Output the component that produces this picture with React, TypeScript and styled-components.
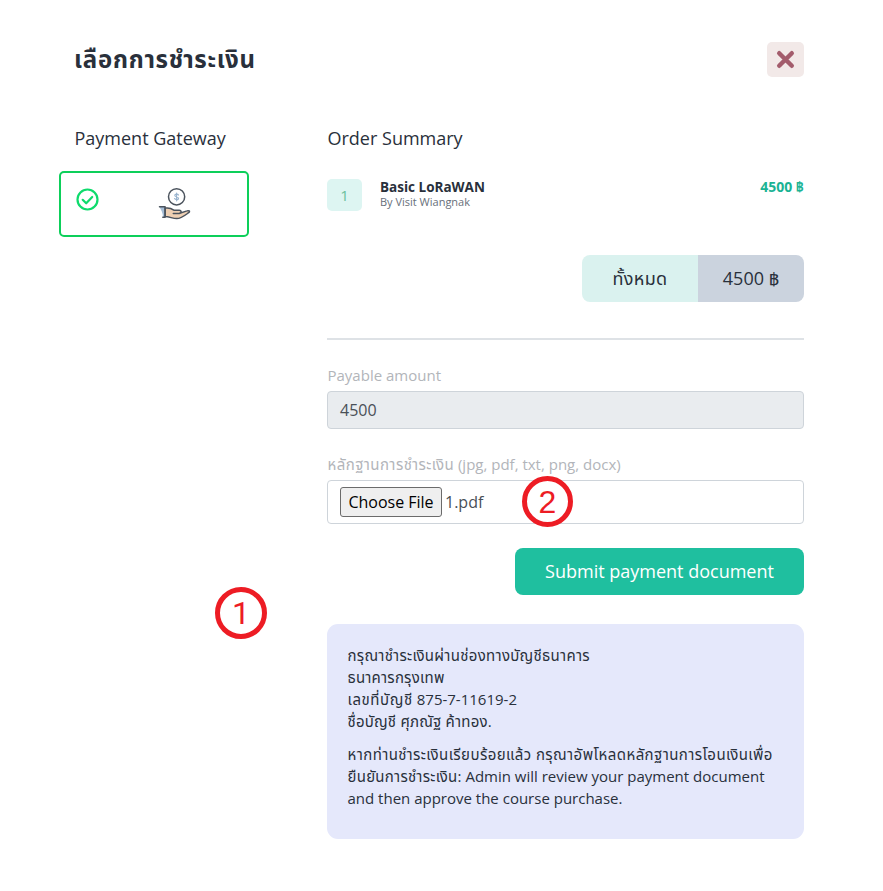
import React from 'react';
import styled, { createGlobalStyle } from 'styled-components';

const Global = createGlobalStyle`
  *, *::before, *::after { box-sizing: border-box; }
  body {
    margin: 0;
    background: #fff;
    color: #29303b;
    font-family: "Open Sans", "Noto Sans", "Noto Sans Thai", sans-serif;
  }
`;

const Page = styled.main`
  position: relative;
  width: 883px;
  height: 891px;
  padding: 42px 79px 0 59px;
  overflow: hidden;
`;

const Header = styled.header`
  display: flex;
  justify-content: space-between;
  height: 35px;
  padding-left: 15px;
`;

const Title = styled.h1`
  margin: 0;
  font-size: 24px;
  font-weight: 700;
  line-height: 33px;
  white-space: nowrap;
`;

const CloseButton = styled.button`
  display: flex;
  align-items: center;
  justify-content: center;
  width: 37px;
  height: 35px;
  padding: 0;
  border: 0;
  border-radius: 5px;
  background: #f2e9e8;
`;

const Columns = styled.div`
  display: grid;
  grid-template-columns: 190px 477px;
  column-gap: 78px;
  margin-top: 49px;
`;

const Heading = styled.h2<{ $indent?: number }>`
  margin: 0;
  padding-left: ${(p) => p.$indent ?? 0.5}px;
  font-size: 18px;
  font-weight: 400;
  line-height: 25px;
  white-space: nowrap;
`;

const Gateway = styled.div`
  display: flex;
  width: 190px;
  height: 66px;
  margin-top: 20px;
  padding: 15px 0 0 15px;
  border: 2px solid #0dcf5a;
  border-radius: 5px;
`;

const HandIcon = styled.svg`
  margin-left: 59px;
  margin-top: -1px;
`;

const Item = styled.div`
  display: flex;
  height: 32px;
  margin-top: 28px;
`;

const Count = styled.div`
  width: 35px;
  height: 32px;
  border-radius: 5px;
  background: #ddf5f2;
  color: #6abf9c;
  font-size: 15px;
  line-height: 32px;
  text-align: center;
`;

const ItemText = styled.div`
  flex: 1;
  margin-left: 18px;
`;

const ItemName = styled.div`
  font-size: 13.5px;
  font-weight: 700;
  line-height: 16px;
`;

const Author = styled.div`
  color: #686f7a;
  font-size: 11px;
  line-height: 14px;
`;

const Price = styled.div`
  color: #1bb394;
  font-size: 14px;
  font-weight: 700;
  line-height: 15px;
`;

const Total = styled.div`
  display: flex;
  width: 222px;
  height: 47px;
  margin: 44px 0 0 auto;
  border-radius: 8px;
  overflow: hidden;
  font-size: 18px;
  line-height: 47px;
  text-align: center;
`;

const TotalLabel = styled.div`
  width: 116px;
  background: #daf2ef;
`;

const TotalValue = styled.div`
  width: 106px;
  background: #cbd3de;
`;

const Rule = styled.hr`
  height: 2px;
  margin: 36px 0 0;
  border: 0;
  background: #dee2e6;
`;

const Label = styled.div`
  height: 22px;
  margin-top: 24px;
  padding-left: 0.5px;
  color: #b2b5ba;
  font-size: 15px;
  line-height: 22px;
  white-space: nowrap;
`;

const Field = styled.div<{ $file?: boolean }>`
  display: flex;
  align-items: center;
  height: ${(p) => (p.$file ? 44 : 38)}px;
  margin-top: 5px;
  padding: 0 12px;
  border: 1px solid #ced4da;
  border-radius: 4px;
  background: ${(p) => (p.$file ? '#fff' : '#e9ecef')};
  color: #495057;
  font-size: 16px;
`;

const FileButton = styled.button`
  width: 102px;
  height: 30px;
  margin-right: 3px;
  padding: 0;
  border: 1px solid #6b6b6b;
  border-radius: 3px;
  background: #efefef;
  color: #000;
  font-family: inherit;
  font-size: 16px;
  white-space: nowrap;
`;

const Submit = styled.button`
  display: block;
  width: 289px;
  height: 47px;
  margin: 24px 0 0 auto;
  padding: 0 0 2px;
  border: 0;
  border-radius: 8px;
  background: #1fbf9f;
  color: #fff;
  font-family: inherit;
  font-size: 18px;
  white-space: nowrap;
`;

const Notice = styled.section`
  height: 215px;
  margin-top: 29px;
  padding: 20px 20px 20px 20.5px;
  border-radius: 11px;
  background: #e5e8fb;
  font-size: 15px;
  line-height: 22px;
`;

const Paragraph = styled.div`
  margin-bottom: 11px;
`;

const Line = styled.div`
  height: 22px;
  white-space: nowrap;
`;

const Thai = styled.span<{ $spacing?: number }>`
  letter-spacing: ${(p) => p.$spacing ?? 0}px;
`;

const Marker = styled.div<{ $x: number; $y: number; $size: number; $font: string }>`
  position: absolute;
  left: ${(p) => p.$x}px;
  top: ${(p) => p.$y}px;
  width: ${(p) => p.$size}px;
  height: ${(p) => p.$size}px;
  border: 5px solid #ed1c24;
  border-radius: 50%;
  color: #ed1c24;
  font-family: ${(p) => p.$font}, sans-serif;
  font-size: 32px;
  line-height: ${(p) => p.$size - 9}px;
  text-align: center;
`;

export default function App() {
  return (
    <Page>
      <Global />
      <Header>
        <Title><Thai $spacing={0.75}>เลือกการชำระเงิน</Thai></Title>
        <CloseButton aria-label="Close">
          <svg width="19" height="19" viewBox="0 0 19 19" fill="none" stroke="#a35c6c" strokeWidth="4.4" strokeLinecap="round">
            <path d="M3.2 3.2 15.8 15.8M15.8 3.2 3.2 15.8" />
          </svg>
        </CloseButton>
      </Header>
      <Columns>
        <div>
          <Heading $indent={15.5}>Payment Gateway</Heading>
          <Gateway>
            <svg width="23" height="23" viewBox="0 0 23 23" fill="none" stroke="#0edb6c" strokeWidth="2.2" strokeLinecap="round" strokeLinejoin="round">
              <circle cx="11.5" cy="11.5" r="10" />
              <path d="m6.7 11.8 3.5 3.5 6-6.3" />
            </svg>
            <HandIcon width="33" height="33" viewBox="0 0 33 33" fill="none" stroke="#4b535d" strokeWidth="1.5" strokeLinecap="round" strokeLinejoin="round">
              <circle cx="18.6" cy="9.8" r="8.1" />
              <path d="M20.5 8c-.6-1.1-3.7-1.3-3.7.4 0 1.6 3.7 1.2 3.7 3 0 1.8-3.3 1.5-3.9.2M18.6 6v7.8" stroke="#9ab4cf" strokeWidth="1.2" />
              <path d="M1.5 20h5.6v10.2H5C4.9 26 3.4 23.5 1.5 20Z" fill="#a5bdd6" stroke="none" />
              <path d="M7.1 21.1c3.9-.7 6.1.1 8.7 2.1h5.5c2.2 0 2.4 2.6.5 3l7.2-2.3c1.8-.7 3.3.3 2 1.5-4.7 3.4-7.8 6.2-12.2 6.2-4.2 0-7.3-2-11.7-2Z" fill="#efd0b3" />
              <path d="M1.5 19.7h5.6v10.5H4.8M15.3 26.4h6.2" />
            </HandIcon>
          </Gateway>
        </div>
        <div>
          <Heading>Order Summary</Heading>
          <Item>
            <Count>1</Count>
            <ItemText>
              <ItemName>Basic LoRaWAN</ItemName>
              <Author>By Visit Wiangnak</Author>
            </ItemText>
            <Price>4500 ฿</Price>
          </Item>
          <Total>
            <TotalLabel><Thai $spacing={0.3}>ทั้งหมด</Thai></TotalLabel>
            <TotalValue>4500 ฿</TotalValue>
          </Total>
          <Rule />
          <Label>Payable amount</Label>
          <Field>4500</Field>
          <Label><Thai $spacing={0.43}>หลักฐานการชำระเงิน</Thai> (jpg, pdf, txt, png, docx)</Label>
          <Field $file>
            <FileButton>Choose File</FileButton>
            <span>1.pdf</span>
          </Field>
          <Submit>Submit payment document</Submit>
          <Notice>
            <Paragraph>
              <Line><Thai $spacing={0.3}>กรุณาชำระเงินผ่านช่องทางบัญชีธนาคาร</Thai></Line>
              <Line><Thai $spacing={0.22}>ธนาคารกรุงเทพ</Thai></Line>
              <Line><Thai $spacing={0.6}>เลขที่บัญชี</Thai> 875-7-11619-2</Line>
              <Line><Thai $spacing={0.2}>ชื่อบัญชี ศุภณัฐ ค้าทอง.</Thai></Line>
            </Paragraph>
            <Paragraph>
              <Line><Thai $spacing={0.42}>หากท่านชำระเงินเรียบร้อยแล้ว กรุณาอัพโหลดหลักฐานการโอนเงินเพื่อ</Thai></Line>
              <Line><Thai $spacing={0.28}>ยืนยันการชำระเงิน</Thai>: Admin will review your payment document</Line>
              <Line>and then approve the course purchase.</Line>
            </Paragraph>
          </Notice>
        </div>
      </Columns>
      <Marker $x={215} $y={587} $size={52} $font="Roboto">1</Marker>
      <Marker $x={522} $y={476} $size={51} $font={'"Liberation Sans"'}>2</Marker>
    </Page>
  );
}
